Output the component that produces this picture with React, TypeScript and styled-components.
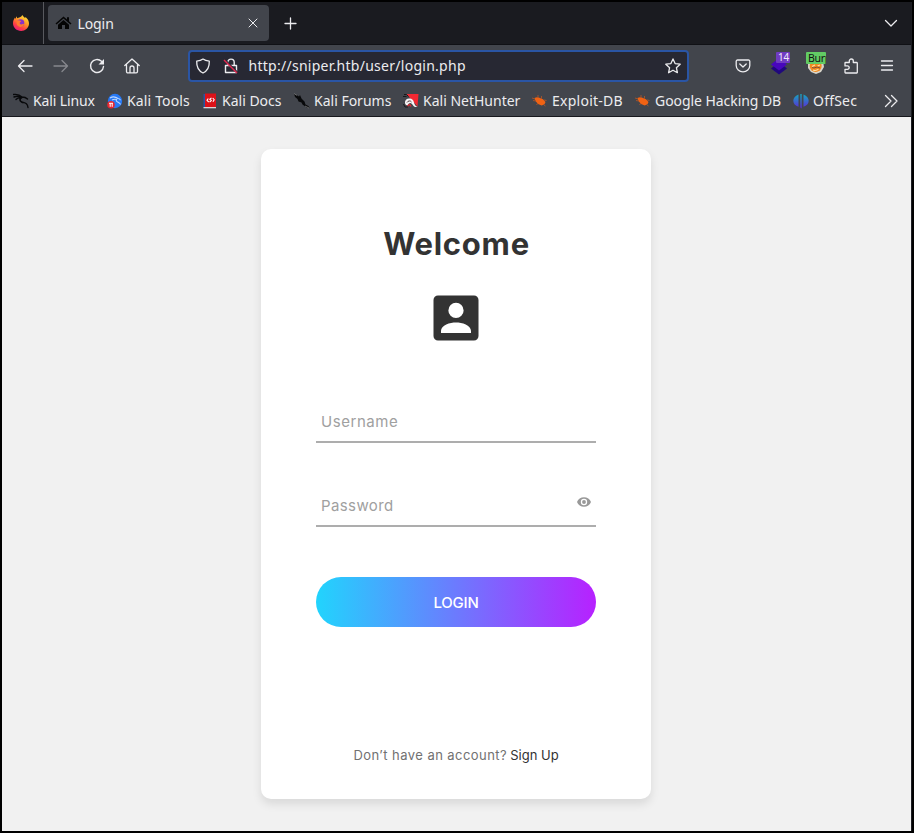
import React from "react";
import styled, { createGlobalStyle } from "styled-components";

const GlobalStyle = createGlobalStyle`
  * { box-sizing: border-box; }
  body { margin: 0; background: #000; }
  button, input { font: inherit; color: inherit; border: 0; background: none; padding: 0; margin: 0; }
  svg { display: block; flex: none; }
`;

const Window = styled.div`
  width: 914px;
  height: 833px;
  padding: 2px;
  background: #000;
  display: flex;
  flex-direction: column;
  overflow: hidden;
  font-family: "Noto Sans", sans-serif;
  font-size: 14px;
  color: #ececef;
`;

const Screen = styled.div`
  flex: 1;
  min-height: 0;
  display: flex;
  flex-direction: column;
  border-right: 1px solid #1c1d22;
`;

const TabBar = styled.header`
  height: 43px;
  flex: none;
  display: flex;
  align-items: center;
  background: #1a1b20;
  border-bottom: 1px solid #101115;
`;

const PinnedView = styled.div`
  width: 42px;
  height: 42px;
  padding: 0 0 0 10px;
  display: flex;
  align-items: center;
  border-right: 1px solid #58595e;
`;

const Tab = styled.div`
  width: 221px;
  height: 36px;
  margin-left: 4px;
  padding: 0 11px 0 7px;
  display: flex;
  align-items: center;
  border-radius: 4px;
  background: #42454c;
`;

const TabTitle = styled.span`
  flex: 1;
  margin: 1px 0 0 5.5px;
  line-height: 20px;
  letter-spacing: -0.1px;
`;

const NewTab = styled.button`
  display: flex;
  margin-left: 15px;
`;

const TabList = styled.button`
  display: flex;
  margin-left: auto;
  margin-right: 13px;
`;

const Toolbar = styled.nav`
  height: 41px;
  flex: none;
  display: flex;
  align-items: center;
  padding: 0 16px 0 15px;
  background: #42454c;
`;

const NavButtons = styled.div`
  width: 170.5px;
  display: flex;
  gap: 19.8px;
`;

const ToolButton = styled.button<{ $dim?: boolean }>`
  display: flex;
  width: 16px;
  height: 16px;
  opacity: ${(p) => (p.$dim ? 0.4 : 1)};
`;

const AddressBar = styled.div`
  width: 501px;
  height: 32px;
  display: flex;
  align-items: center;
  padding: 0 6px 0 5px;
  border: 2px solid #2a55a5;
  border-radius: 4px;
  background: #272833;
`;

const Url = styled.span`
  flex: 1;
  margin-left: 10px;
  line-height: 20px;
  letter-spacing: 0.27px;
`;

const SiteIcons = styled.div`
  display: flex;
  gap: 12px;
`;

const Extensions = styled.div`
  margin-left: auto;
  display: flex;
  align-items: center;
  gap: 20px;
`;

const Extension = styled.div`
  position: relative;
  width: 16px;
  height: 16px;
`;

const CountBadge = styled.span`
  position: absolute;
  top: -6px;
  left: 5px;
  padding: 0 1.5px 0 2px;
  border-radius: 1px;
  background: #6f3bc2;
  color: #f1eafb;
  font-size: 10px;
  line-height: 11px;
  letter-spacing: -0.3px;
  white-space: nowrap;
`;

const ProxyBadge = styled.span`
  position: absolute;
  top: -6px;
  left: -1px;
  width: 20px;
  height: 12px;
  padding-left: 2px;
  overflow: hidden;
  border-radius: 1px;
  background: #62cc64;
  color: #111;
  font-size: 10.5px;
  line-height: 12px;
  letter-spacing: -0.3px;
  white-space: nowrap;
`;

const Bookmarks = styled.nav`
  height: 31px;
  flex: none;
  display: flex;
  align-items: center;
  padding: 0 13px 0 11px;
  background: #42454c;
  border-bottom: 1px solid #17181d;
`;

const BookmarkLink = styled.a<{ $width: number; $spacing: number }>`
  width: ${(p) => p.$width}px;
  display: flex;
  align-items: center;
  gap: 4px;
  line-height: 20px;
  letter-spacing: ${(p) => p.$spacing}px;
  white-space: nowrap;
`;

const Overflow = styled.button`
  display: flex;
  margin-left: auto;
`;

const Page = styled.main`
  flex: 1;
  min-height: 0;
  display: flex;
  justify-content: center;
  align-items: flex-start;
  padding-top: 32px;
  background: #f1f1f1;
  font-family: Inter, "Open Sans", sans-serif;
`;

const Card = styled.form`
  width: 390px;
  height: 650px;
  margin-left: -1px;
  padding: 72px 55px 34px;
  display: flex;
  flex-direction: column;
  border-radius: 10px;
  background: #fff;
  box-shadow: 0 5px 10px rgba(0, 0, 0, 0.1);
`;

const Title = styled.h1`
  margin: 0;
  text-align: center;
  font-size: 31px;
  line-height: 46px;
  font-weight: 700;
  letter-spacing: 0.75px;
  text-indent: 1px;
  color: #333;
`;

const Avatar = styled.div`
  height: 60px;
  margin-top: 21px;
  display: flex;
  justify-content: center;
  align-items: center;
`;

const Field = styled.label`
  height: 45px;
  display: flex;
  align-items: center;
  margin-bottom: 39px;
  padding: 0 5px;
  border-bottom: 2px solid #adadad;

  ${Avatar} + & {
    margin-top: 50px;
  }
`;

const Input = styled.input<{ $spacing: number }>`
  flex: 1;
  min-width: 0;
  height: 43px;
  outline: none;
  padding-top: 3px;
  font-size: 15px;
  color: #555;

  &::placeholder {
    color: #a0a0a0;
    letter-spacing: ${(p) => p.$spacing}px;
    opacity: 1;
  }
`;

const ShowPassword = styled.span`
  display: flex;
  margin-top: -3px;
`;

const LoginButton = styled.button`
  height: 50px;
  margin-top: 11px;
  border-radius: 25px;
  background: linear-gradient(to right, #21d4fd, #b721ff);
  color: #fff;
  font-size: 15px;
  font-weight: 500;
  line-height: 50px;
  padding-top: 1px;
  letter-spacing: -0.2px;
`;

const SignUp = styled.p`
  margin: auto 0 0;
  text-align: center;
  font-size: 13px;
  line-height: 20px;
  letter-spacing: 0.44px;
  white-space: nowrap;
  color: #717171;
`;

const SignUpLink = styled.a`
  margin-left: -1px;
  letter-spacing: 0;
  color: #333;
`;

const Stroke = ({ d, size = 16, width = 1.3 }: { d: string; size?: number; width?: number }) => (
  <svg width={size} height={size} viewBox={`0 0 ${size} ${size}`} fill="none" stroke="currentColor" strokeWidth={width} strokeLinecap="round" strokeLinejoin="round">
    <path d={d} />
  </svg>
);

const Firefox = () => (
  <svg width="18" height="18" viewBox="0 0 18 18">
    <defs>
      <linearGradient id="fox" x1="0.8" y1="0" x2="0.2" y2="1">
        <stop offset="0" stopColor="#ffe83c" />
        <stop offset="0.4" stopColor="#ff9a26" />
        <stop offset="0.7" stopColor="#ff4144" />
        <stop offset="1" stopColor="#e91583" />
      </linearGradient>
    </defs>
    <path d="M10.4 1c.4 1.2 1.5 1.8 2.7 3l.4-.9c2.2 1.7 3.700 4.100 3.500 7-.4 4-3.800 6.900-7.900 6.900-4.500 0-8.100-3.300-8.100-7.700 0-2.600.9-4.500 2-5.900l.3 1.500 1.400-2.600.5 2c1.600-.6 3.900-1 5.200-3.300z" fill="url(#fox)" />
    <circle cx="8.600" cy="9" r="3.700" fill="#8b32c8" />
    <path d="M4.800 6.700c1.600-.8 3.300-.4 4.400.7L7.800 8.500c-.3 1 .3 2 1.700 2 1.300 0 1.700-.6 2.600-.3-.5 1.700-2 2.900-3.900 2.700-2.800-.2-4.400-3.200-3.400-6.200z" fill="#ff7a2f" />
  </svg>
);

const House = () => (
  <svg width="17" height="16" viewBox="0 0 17 16" fill="#050505">
    <path d="M8.500 1.500 12 4.500V2.300h2v4l2.500 2.200-1 1.100-7-6-7 6-1-1.100zM8.500 5l5.500 4.700V14h-4v-4H7v4H3V9.700z" />
  </svg>
);

const Shield = () => (
  <Stroke d="M8 1.100c1.500 1.200 4 1.900 6.300 2C14.500 8.500 12.500 13 8 15 3.500 13 1.500 8.500 1.700 3.100 4 3 6.500 2.300 8 1.100z" />
);

const InsecureLock = () => (
  <svg width="16" height="16" viewBox="0 0 16 16" fill="none" stroke="#ececef" strokeWidth="1.400">
    <path d="M4.800 7V4.300a3.200 3.200 0 0 1 6.400 0V7M2.500 7.500h11v7h-11z" strokeLinejoin="round" />
    <path d="M1.800 2 14.800 15" stroke="#272833" strokeWidth="2" />
    <path d="M1 2 14 15" stroke="#e22850" strokeWidth="1.400" />
  </svg>
);

const Dragon = () => (
  <svg width="16" height="16" viewBox="0 0 16 16" fill="none" stroke="#08090b" strokeWidth="1.400" strokeLinecap="round">
    <path d="M.5 1.500C4 1 7 2 9 4c2 0 4 .5 5.500 2M1 4c3-1.300 6-.7 8 0M3 6.500C4.500 5 6.500 4.500 8.500 5M9 4C6.500 5.500 6.500 8 9 9c3 1 5.500 1 6 5.500" />
    <path d="M7 5c-1 2.500 0 4.500 3 5" strokeWidth=".8" />
  </svg>
);

const KaliTools = () => (
  <svg width="16" height="16" viewBox="0 0 16 16">
    <circle cx="8" cy="8" r="7.200" fill="#2779f5" />
    <path d="M3 5c3-2 6-1 8 .5 1.500 0 2 .7 2.500 1.700M5 7c2-1 3-1 4.500-.5-1.500 2.500 3.500 2.500 4 5" fill="none" stroke="#bcd7ff" strokeWidth="1.100" />
    <circle cx="4" cy="11.700" r="3.800" fill="#e62731" />
    <path d="M2 10.300h4M3.200 10.300v3.500M5.200 10.300v3.500" stroke="#fff" fill="none" />
  </svg>
);

const KaliDocs = () => (
  <svg width="16" height="16" viewBox="0 0 16 16">
    <path d="M1.500 1h2v14h-2z" fill="#2855a5" />
    <path d="M3 .500H14V14H3z" fill="#dc1118" />
    <path d="M1.500 14H14v1.300H1.500z" fill="#ddd4d7" />
    <path d="M6.300 5.500 5 7.300l1.700 1.700M10.700 5l1.500 1.700-1.300 2M9.500 4.800 7.800 6.300l1.500 1.200-1.700 1.700" fill="none" stroke="#fff" strokeWidth="1.100" />
  </svg>
);

const KaliForums = () => (
  <svg width="16" height="16" viewBox="0 0 16 16">
    <path d="M0 .5l5 3 1-1.500 1.500 3.500 3 3 1 3 3 1.500L15.500 15l-3-.500L8.500 11.500l-1-2-3-1-1-2.500L1 4z" fill="#08090b" />
    <path d="m0 .5 3 2M11 13l4 2" stroke="#999" strokeWidth=".6" />
  </svg>
);

const NetHunter = () => (
  <svg width="16" height="16" viewBox="0 0 16 16">
    <path d="M3.500 1h12l-1 12.500z" fill="#f22832" />
    <path d="M14.500 14c-4 .5-4-1.500-5.500-3-2-2-3.500-.5-4.500 1.500C.5 12 1.500 5.500 6 5.500c3.500 0 4.500 2 5 4s1.500 3.500 3.500 4.500z" fill="#f7f4f5" />
    <path d="M4 9.500c1-2 3.500-2 4.500-.5" stroke="#38252a" strokeWidth=".9" fill="none" />
    <path d="M4.500 13.300C6 11 7 11.200 8 13.500" stroke="#dd2931" strokeWidth="1.300" fill="none" />
    <path d="M1 1.500h2.500l2 2M0 3.500h3.500M.5 11l1.500 3h3" stroke="#17171a" fill="none" />
  </svg>
);

const Beetle = () => (
  <svg width="16" height="16" viewBox="0 0 16 16">
    <path d="M2.500 5c2-1.200 4-1 6 .2l2.500 1 2.500 2.800-1 2.200-2.800 1.300-3.700-1.600-2.500-2.900z" fill="#f06213" />
    <path d="M6 2v3M9.500 3v3M1 7.500l3 .5M4.500 12l1.500-2M12 7l2.500.5M12 12l1.500 1M0 5l3 1" stroke="#a95429" strokeWidth=".9" />
  </svg>
);

const OffSec = () => (
  <svg width="16" height="16" viewBox="0 0 16 16">
    <defs>
      <linearGradient id="offsec" gradientUnits="userSpaceOnUse" x1="0" y1="1" x2="0" y2="15">
        <stop offset="0" stopColor="#14a9bd" />
        <stop offset="1" stopColor="#5b2bd8" />
      </linearGradient>
    </defs>
    <path d="M5.500 1.500v12.300C-.8 12-2 4.500 5.500 1.500zM7.300 1h1.400v14.500l-1.400-1zM10.500 1.500c7.500 3 6.300 10.500 0 12.300z" fill="url(#offsec)" />
  </svg>
);

const Layers = () => (
  <svg width="18" height="18" viewBox="0 0 18 18">
    <path d="m0 10.500 8 6 8-6-3-2.500H3z" fill="#20087d" />
    <path d="m0 6.500 8 6 8-6L8 0z" fill="#4806bd" />
  </svg>
);

const FoxFace = () => (
  <svg width="18" height="17" viewBox="0 0 18 17">
    <path d="M1 3h15l1 6-3 5-5 2L4 14 1 10z" fill="#d8d4c9" />
    <circle cx="8.700" cy="8" r="6" fill="#f38920" />
    <path d="M5 8.500 8 7M10.500 8l2.500-1M6 12c2 .8 4 .5 5.500-.8" fill="none" stroke="#ffe0a4" strokeWidth="1.100" />
    <path d="m5 9.500 2 .5 3-1 3 1" fill="none" stroke="#815036" />
  </svg>
);

const AccountBox = () => (
  <svg width="60" height="60" viewBox="0 0 24 24" fill="#333">
    <path fillRule="evenodd" d="M4.800 3h14.400A1.800 1.800 0 0 1 21 4.800v14.400a1.800 1.800 0 0 1-1.800 1.800H4.800A1.800 1.800 0 0 1 3 19.200V4.800A1.800 1.800 0 0 1 4.800 3zM12 5.900a3.050 3.050 0 1 0 0 6.100 3.050 3.050 0 0 0 0-6.100zM6 18h12v-.800c0-2.400-3.600-3.400-6-3.400s-6 1-6 3.400z" />
  </svg>
);

const Eye = () => (
  <svg width="14" height="10" viewBox="1 4.500 22 15" fill="#999">
    <path fillRule="evenodd" d="M12 4.500C7 4.500 2.700 7.600 1 12c1.700 4.400 6 7.500 11 7.500s9.300-3.100 11-7.500c-1.700-4.400-6-7.500-11-7.500zM12 17a5 5 0 1 1 0-10 5 5 0 0 1 0 10zm0-8a3 3 0 1 0 0 6 3 3 0 0 0 0-6z" />
  </svg>
);

const bookmarks = [
  { label: "Kali Linux", icon: <Dragon />, width: 94, spacing: -0.12 },
  { label: "Kali Tools", icon: <KaliTools />, width: 95, spacing: 0.15 },
  { label: "Kali Docs", icon: <KaliDocs />, width: 92, spacing: 0 },
  { label: "Kali Forums", icon: <KaliForums />, width: 109, spacing: 0 },
  { label: "Kali NetHunter", icon: <NetHunter />, width: 129, spacing: 0 },
  { label: "Exploit-DB", icon: <Beetle />, width: 103, spacing: 0.25 },
  { label: "Google Hacking DB", icon: <Beetle />, width: 158, spacing: -0.06 },
  { label: "OffSec", icon: <OffSec />, width: 70, spacing: 0.2 },
];

export default function App() {
  return (
    <Window>
      <GlobalStyle />
      <Screen>
        <TabBar>
          <PinnedView><Firefox /></PinnedView>
          <Tab>
            <House />
            <TabTitle>Login</TabTitle>
            <Stroke size={10} width={1} d="M1 1l8 8M9 1 1 9" />
          </Tab>
          <NewTab><Stroke size={13} d="M6.500 1v11M1 6.500h11" /></NewTab>
          <TabList><Stroke size={14} d="M1.500 4.500 7 10l5.500-5.500" /></TabList>
        </TabBar>
        <Toolbar>
          <NavButtons>
            <ToolButton><Stroke d="M15 8H1.500M7 2.500 1.500 8 7 13.500" /></ToolButton>
            <ToolButton $dim><Stroke d="M1 8h13.500M9 2.500 14.500 8 9 13.500" /></ToolButton>
            <ToolButton>
              <svg width="16" height="16" viewBox="0 0 16 16">
                <path d="M12.500 3.300A6.500 6.500 0 1 0 14.500 8.500" fill="none" stroke="currentColor" strokeWidth="1.400" strokeLinecap="round" />
                <path d="M15 1v5.500H9.500z" fill="currentColor" />
              </svg>
            </ToolButton>
            <ToolButton><Stroke d="M.8 7.500 8 1l7.200 6.500M2.500 6.500v7a1.300 1.300 0 0 0 1.300 1.300h8.400a1.300 1.300 0 0 0 1.300-1.300v-7M6 14.500V10a2 2 0 0 1 4 0v4.500" /></ToolButton>
          </NavButtons>
          <AddressBar>
            <SiteIcons><Shield /><InsecureLock /></SiteIcons>
            <Url>http://sniper.htb/user/login.php</Url>
            <Stroke d="m8 .9 2.100 4.700 5.100.6-3.800 3.500 1 5L8 12.200l-4.400 2.500 1-5L.8 6.200l5.100-.6z" />
          </AddressBar>
          <Extensions>
            <ToolButton><Stroke d="M2.500 2h11a1.300 1.300 0 0 1 1.300 1.300V7.500a6.800 6.300 0 0 1-13.600 0V3.300A1.300 1.300 0 0 1 2.500 2zM4.800 6 8 9l3.200-3" /></ToolButton>
            <Extension><Layers /><CountBadge>14</CountBadge></Extension>
            <Extension><FoxFace /><ProxyBadge>Burp</ProxyBadge></Extension>
            <ToolButton><Stroke d="M6.300 4.500V3a2 2 0 0 1 4 0v1.500h3.200a.8.8 0 0 1 .8.8v9.200a.5.5 0 0 1-.5.5H2.500a.5.5 0 0 1-.5-.5v-3.200h2.500a1.600 1.600 0 0 0 0-3.400H2V5a.5.5 0 0 1 .5-.5z" /></ToolButton>
            <ToolButton><Stroke d="M2.500 3h11M2.500 7.500h11M2.500 12h11" /></ToolButton>
          </Extensions>
        </Toolbar>
        <Bookmarks>
          {bookmarks.map((b) => (
            <BookmarkLink key={b.label} $width={b.width} $spacing={b.spacing}>
              {b.icon}
              {b.label}
            </BookmarkLink>
          ))}
          <Overflow><Stroke size={14} d="M1.500 1.500 7 7l-5.500 5.500M7.500 1.500 13 7l-5.500 5.500" /></Overflow>
        </Bookmarks>
        <Page>
          <Card>
            <Title>Welcome</Title>
            <Avatar><AccountBox /></Avatar>
            <Field><Input $spacing={0.55} placeholder="Username" /></Field>
            <Field>
              <Input $spacing={0.4} type="password" placeholder="Password" />
              <ShowPassword><Eye /></ShowPassword>
            </Field>
            <LoginButton type="button">LOGIN</LoginButton>
            <SignUp>Don’t have an account? <SignUpLink>Sign Up</SignUpLink></SignUp>
          </Card>
        </Page>
      </Screen>
    </Window>
  );
}
